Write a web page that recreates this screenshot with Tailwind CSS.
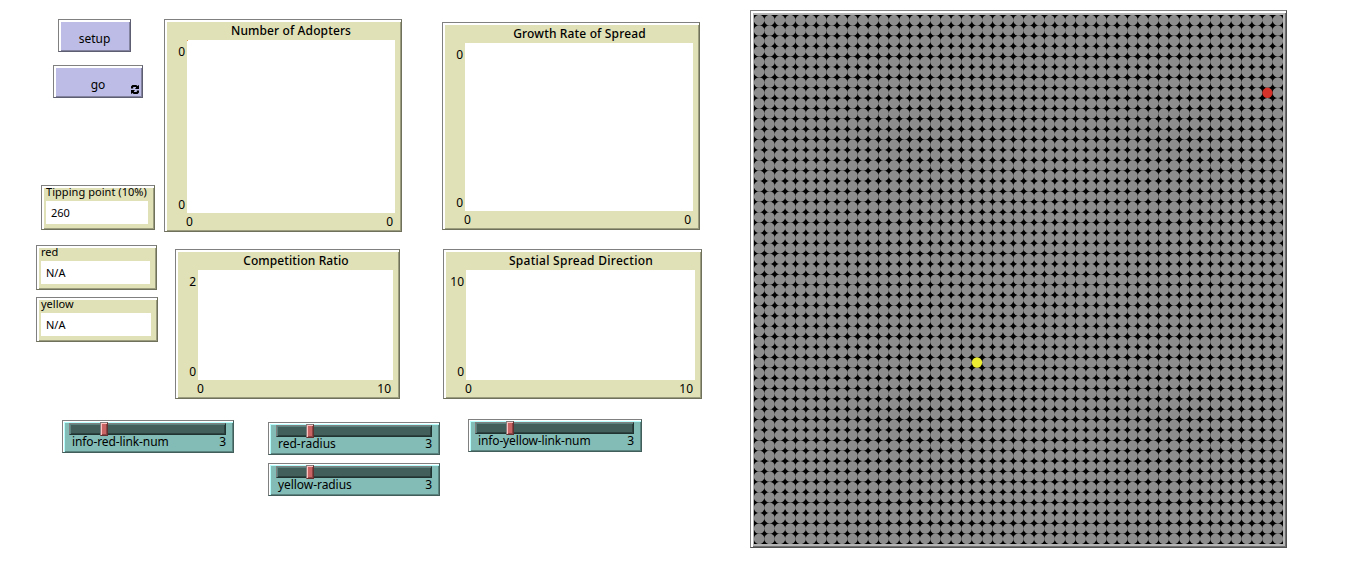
<!DOCTYPE html>
<html lang="en">
<head>
<meta charset="utf-8">
<title>Spread model</title>
<script src="https://cdn.jsdelivr.net/npm/@tailwindcss/browser@4"></script>
</head>
<body class="bg-white">
<main class="flex h-[565px] w-[1349px] overflow-hidden bg-white font-['Noto_Sans','Open_Sans',sans-serif] text-[12px] leading-4 text-black">
  <div class="w-[750px] shrink-0">
    <div class="flex h-[419px] items-start">
      <section class="flex w-[164px] shrink-0 flex-col items-start pt-[19px]">
        <button class="ml-[58px] h-[33px] w-[73px] border border-t-[#808080] border-l-[#808080] border-r-[#5e5e73] border-b-[#5e5e73] bg-[#bcbce6] pt-[7px] shadow-[inset_2px_2px_0_#fff,inset_-1px_-1px_0_#83839f]">setup</button>
        <button class="mt-[13px] ml-[53px] flex h-[33px] w-[90px] items-end border border-t-[#808080] border-l-[#808080] border-r-[#5e5e73] border-b-[#5e5e73] bg-[#bcbce6] pr-[3px] pb-[3px] shadow-[inset_2px_2px_0_#fff,inset_-1px_-1px_0_#83839f]">
          <span class="grow pb-px pl-[11px]">go</span>
          <svg class="h-[9px] w-[8px]" viewBox="0 0 8 9"><path d="M0 3.4V1.4L1.4 0H5.4L6.4 1L8 0V4H4L5.2 2.4L4.8 2H2.2V3.4zM8 5.6V7.6L6.6 9H2.6L1.6 8L0 9V5H4L2.8 6.6L3.2 7H5.8V5.6z"/></svg>
        </button>
        <div class="mt-[87px] ml-[41px] h-[45px] w-[114px] border border-t-[#808080] border-l-[#808080] border-r-[#70715a] border-b-[#70715a] bg-[#e0e1b6] pl-[4px] text-[11px] shadow-[inset_2px_2px_0_#fff,inset_-1px_-1px_0_#9c9d7f]">
          <div class="h-[15px] leading-[11px] tracking-[0.05px] whitespace-nowrap">Tipping point (10%)</div>
          <div class="h-[23px] w-[102px] bg-white pl-[5px] leading-[24px]">260</div>
        </div>
        <div class="mt-[15px] ml-[36px] h-[45px] w-[121px] border border-t-[#808080] border-l-[#808080] border-r-[#70715a] border-b-[#70715a] bg-[#e0e1b6] pl-[4px] text-[11px] shadow-[inset_2px_2px_0_#fff,inset_-1px_-1px_0_#9c9d7f]">
          <div class="h-[15px] leading-[11px]">red</div>
          <div class="h-[23px] w-[109px] bg-white pl-[5px] leading-[24px]">N/A</div>
        </div>
        <div class="mt-[7px] ml-[36px] h-[45px] w-[122px] border border-t-[#808080] border-l-[#808080] border-r-[#70715a] border-b-[#70715a] bg-[#e0e1b6] pl-[4px] text-[11px] shadow-[inset_2px_2px_0_#fff,inset_-1px_-1px_0_#9c9d7f]">
          <div class="h-[15px] leading-[11px]">yellow</div>
          <div class="h-[23px] w-[110px] bg-white pl-[5px] leading-[24px]">N/A</div>
        </div>
      </section>
      <section class="w-[278px] shrink-0 pt-[19px]">
        <div class="h-[213px] w-[238px] border border-t-[#808080] border-l-[#808080] border-r-[#70715a] border-b-[#70715a] bg-[#e0e1b6] shadow-[inset_2px_2px_0_#fff,inset_-1px_-1px_0_#9c9d7f]">
          <h2 class="h-[20px] pt-[3px] pl-[16px] text-center font-medium tracking-[0.12px]">Number of Adopters</h2>
          <div class="flex h-[173px]">
            <div class="flex w-[22px] flex-col justify-between pt-[4px] pr-[2px] text-right"><span>0</span><span>0</span></div>
            <div class="w-[208px] bg-white"><div class="size-px bg-[#e29a4d]"></div></div>
          </div>
          <div class="flex w-[230px] justify-between pt-[1px] pr-[2px] pl-[21px]"><span>0</span><span>0</span></div>
        </div>
        <div class="mt-[17px] ml-[11px] h-[150px] w-[225px] border border-t-[#808080] border-l-[#808080] border-r-[#70715a] border-b-[#70715a] bg-[#e0e1b6] shadow-[inset_2px_2px_0_#fff,inset_-1px_-1px_0_#9c9d7f]">
          <h2 class="h-[20px] pt-[3px] pl-[17px] text-center font-medium tracking-[0.1px]">Competition Ratio</h2>
          <div class="flex h-[110px]">
            <div class="flex w-[22px] flex-col justify-between pt-[4px] pr-[2px] text-right"><span>2</span><span>0</span></div>
            <div class="w-[195px] bg-white"></div>
          </div>
          <div class="flex w-[217px] justify-between pt-[1px] pr-[2px] pl-[21px]"><span>0</span><span>10</span></div>
        </div>
      </section>
      <section class="w-[308px] shrink-0 pt-[22px]">
        <div class="h-[208px] w-[258px] border border-t-[#808080] border-l-[#808080] border-r-[#70715a] border-b-[#70715a] bg-[#e0e1b6] shadow-[inset_2px_2px_0_#fff,inset_-1px_-1px_0_#9c9d7f]">
          <h2 class="h-[20px] pt-[3px] pl-[17px] text-center font-medium tracking-[0.15px]">Growth Rate of Spread</h2>
          <div class="flex h-[168px]">
            <div class="flex w-[22px] flex-col justify-between pt-[4px] pr-[2px] text-right"><span>0</span><span>0</span></div>
            <div class="w-[228px] bg-white"></div>
          </div>
          <div class="flex w-[250px] justify-between pt-[1px] pr-[2px] pl-[21px]"><span>0</span><span>0</span></div>
        </div>
        <div class="mt-[19px] ml-px h-[150px] w-[259px] border border-t-[#808080] border-l-[#808080] border-r-[#70715a] border-b-[#70715a] bg-[#e0e1b6] shadow-[inset_2px_2px_0_#fff,inset_-1px_-1px_0_#9c9d7f]">
          <h2 class="h-[20px] pt-[3px] pl-[17px] text-center font-medium tracking-[0.28px]">Spatial Spread Direction</h2>
          <div class="flex h-[110px]">
            <div class="flex w-[22px] flex-col justify-between pt-[4px] pr-[2px] text-right"><span>10</span><span>0</span></div>
            <div class="w-[229px] bg-white"></div>
          </div>
          <div class="flex w-[251px] justify-between pt-[1px] pr-[2px] pl-[21px]"><span>0</span><span>10</span></div>
        </div>
      </section>
    </div>
    <section class="flex items-start pl-[62px]">
      <div class="mt-px h-[33px] w-[172px] border border-t-[#808080] border-l-[#808080] border-r-[#415e5b] border-b-[#415e5b] bg-[#83bcb6] pl-[6px] shadow-[inset_1px_1px_0_#fff,inset_2px_2px_0_#b7ffff,inset_-1px_-1px_0_#5b837f]">
        <div class="mt-[2px] h-[12px] w-[157px] border border-t-[#808080] border-l-[#808080] border-r-[#203330] border-b-[#203330] bg-[#435f5b] pl-[30px] shadow-[inset_1px_1px_0_#5b837f,inset_-1px_-1px_0_#2d423f]">
          <div class="relative top-[-2px] h-[14px] w-[8px] border border-t-[#808080] border-l-[#808080] border-r-[#642f2f] border-b-[#642f2f] bg-[#c86464] shadow-[inset_1px_1px_0_#ffc0c0,inset_-1px_-1px_0_#8c4646]"></div>
        </div>
        <div class="flex w-[157px] justify-between pl-[3px] leading-[14px]"><span class="tracking-[-0.11px]">info-red-link-num</span><span>3</span></div>
      </div>
      <div class="mt-[3px] ml-[34px] flex flex-col gap-[8px]">
        <div class="h-[33px] w-[172px] border border-t-[#808080] border-l-[#808080] border-r-[#415e5b] border-b-[#415e5b] bg-[#83bcb6] pl-[7px] shadow-[inset_1px_1px_0_#fff,inset_2px_2px_0_#b7ffff,inset_-1px_-1px_0_#5b837f]">
          <div class="mt-[2px] h-[12px] w-[156px] border border-t-[#808080] border-l-[#808080] border-r-[#203330] border-b-[#203330] bg-[#435f5b] pl-[29px] shadow-[inset_1px_1px_0_#5b837f,inset_-1px_-1px_0_#2d423f]">
            <div class="relative top-[-2px] h-[14px] w-[8px] border border-t-[#808080] border-l-[#808080] border-r-[#642f2f] border-b-[#642f2f] bg-[#c86464] shadow-[inset_1px_1px_0_#ffc0c0,inset_-1px_-1px_0_#8c4646]"></div>
          </div>
          <div class="flex w-[156px] justify-between pl-[2px] leading-[14px]"><span>red-radius</span><span>3</span></div>
        </div>
        <div class="h-[33px] w-[172px] border border-t-[#808080] border-l-[#808080] border-r-[#415e5b] border-b-[#415e5b] bg-[#83bcb6] pl-[7px] shadow-[inset_1px_1px_0_#fff,inset_2px_2px_0_#b7ffff,inset_-1px_-1px_0_#5b837f]">
          <div class="mt-[2px] h-[12px] w-[156px] border border-t-[#808080] border-l-[#808080] border-r-[#203330] border-b-[#203330] bg-[#435f5b] pl-[29px] shadow-[inset_1px_1px_0_#5b837f,inset_-1px_-1px_0_#2d423f]">
            <div class="relative top-[-2px] h-[14px] w-[8px] border border-t-[#808080] border-l-[#808080] border-r-[#642f2f] border-b-[#642f2f] bg-[#c86464] shadow-[inset_1px_1px_0_#ffc0c0,inset_-1px_-1px_0_#8c4646]"></div>
          </div>
          <div class="flex w-[156px] justify-between pl-[2px] leading-[14px]"><span class="tracking-[-0.06px]">yellow-radius</span><span>3</span></div>
        </div>
      </div>
      <div class="ml-[28px] h-[33px] w-[174px] border border-t-[#808080] border-l-[#808080] border-r-[#415e5b] border-b-[#415e5b] bg-[#83bcb6] pl-[6px] shadow-[inset_1px_1px_0_#fff,inset_2px_2px_0_#b7ffff,inset_-1px_-1px_0_#5b837f]">
        <div class="mt-[2px] h-[12px] w-[159px] border border-t-[#808080] border-l-[#808080] border-r-[#203330] border-b-[#203330] bg-[#435f5b] pl-[30px] shadow-[inset_1px_1px_0_#5b837f,inset_-1px_-1px_0_#2d423f]">
          <div class="relative top-[-2px] h-[14px] w-[8px] border border-t-[#808080] border-l-[#808080] border-r-[#642f2f] border-b-[#642f2f] bg-[#c86464] shadow-[inset_1px_1px_0_#ffc0c0,inset_-1px_-1px_0_#8c4646]"></div>
        </div>
        <div class="flex w-[159px] justify-between pl-[3px] leading-[14px]"><span class="tracking-[-0.13px]">info-yellow-link-num</span><span>3</span></div>
      </div>
    </section>
  </div>
  <section class="mt-[10px] h-[538px] w-[537px] shrink-0 border border-t-[#808080] border-l-[#808080] border-r-[#505050] border-b-[#505050] bg-[#b4b4b4] pt-[4px] pl-[3px] shadow-[inset_2px_2px_0_#fff,inset_-1px_-1px_0_#6e6e6e]">
    <svg id="world" class="block h-[529px] w-[529px] bg-black" viewBox="0 0 51 51"></svg>
  </section>
</main>
<script>
  // 51 x 51 grid of agents, with one seed for each competitor
  const world = document.getElementById('world');
  const seeds = { '49,7': '#d73229', '21,33': '#eded31' };
  const dots = [], top_ = [];
  for (let y = 0; y < 51; y++) {
    for (let x = 0; x < 51; x++) {
      const c = seeds[x + ',' + y];
      (c ? top_ : dots).push(`<circle cx="${x + 0.5}" cy="${y + 0.5}" r="${c ? 0.5 : 0.51}" fill="${c || '#8d8d8d'}"/>`);
    }
  }
  world.innerHTML = dots.concat(top_).join('');
</script>
</body>
</html>
